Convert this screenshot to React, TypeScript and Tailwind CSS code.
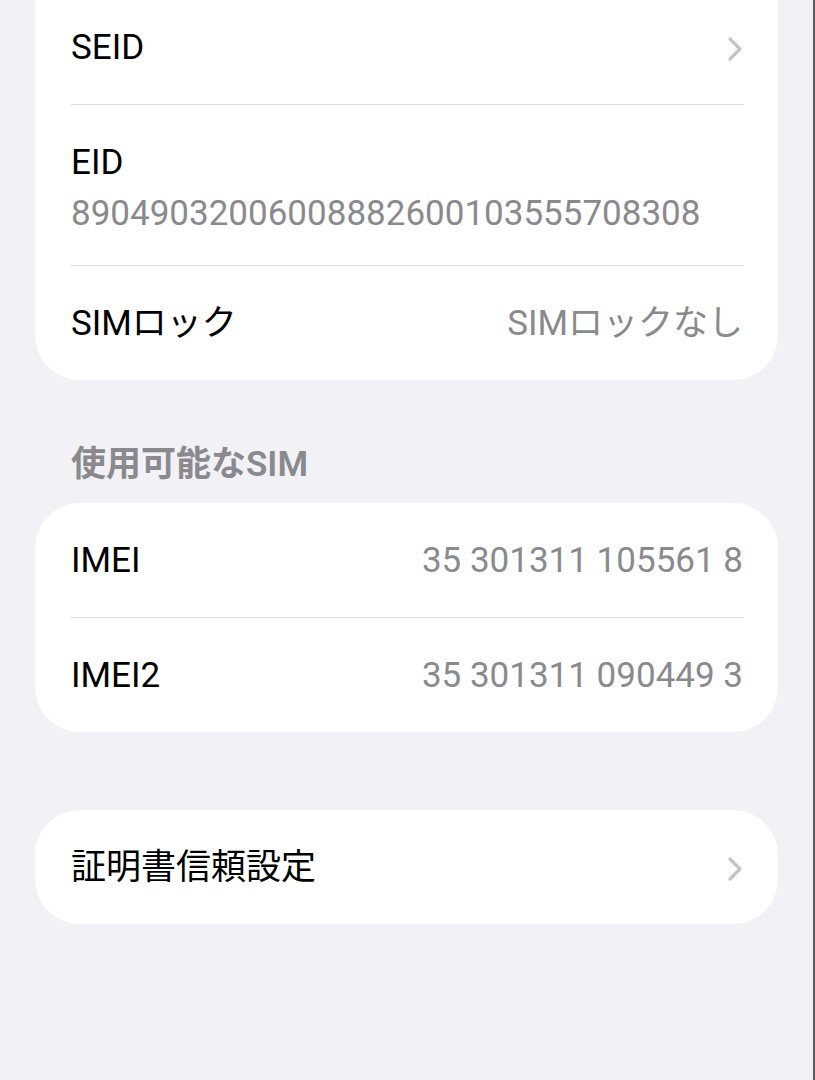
import React from 'react';

const FONT = "font-['Roboto','Noto_Sans_CJK_JP',sans-serif]";

const Chevron = () => (
  <svg width="16" height="26" viewBox="0 0 16 26" fill="none" className="shrink-0">
    <path d="M3 3 L13 13 L3 23" stroke="#c4c4c7" strokeWidth="3.2" strokeLinecap="round" strokeLinejoin="round" />
  </svg>
);

const Divider = () => <div className="ml-[36px] mr-[34px] h-px bg-[#dedee2]" />;

const Row = ({ label, value, chevron }: { label: string; value?: string; chevron?: boolean }) => (
  <div className="flex h-[114px] items-center justify-between pl-[36px] pr-[35px] pt-[3px]">
    <span className="text-[35px] text-black">{label}</span>
    {value && <span className="text-[35px] text-[#8a8a8e]">{value}</span>}
    {chevron && <Chevron />}
  </div>
);

const App: React.FC = () => {
  return (
    <div className={`min-h-screen h-[1080px] overflow-hidden bg-[#f1f1f6] ${FONT} border-r-2 border-[#5a5a5e]`}>
      <div className="pl-[35px] pr-[35px]">
        {/* Top card (scrolled partly off screen) */}
        <div className="-mt-[10px] rounded-b-[45px] bg-white">
          <Row label="SEID" chevron />
          <Divider />
          <div className="flex h-[160px] flex-col justify-center pl-[36px] pr-[35px] pt-[7px]">
            <span className="text-[35px] leading-[42px] text-black">EID</span>
            <span className="mt-[9px] text-[35px] leading-[42px] text-[#8a8a8e]">89049032006008882600103555708308</span>
          </div>
          <Divider />
          <Row label="SIMロック" value="SIMロックなし" />
        </div>

        {/* Available SIM section */}
        <div className="flex h-[123px] items-end pb-[12px] pl-[36px]">
          <span className="text-[35px] font-semibold text-[#8a8a8e]">使用可能なSIM</span>
        </div>
        <div className="rounded-[45px] bg-white">
          <Row label="IMEI" value="35 301311 105561 8" />
          <Divider />
          <Row label="IMEI2" value="35 301311 090449 3" />
        </div>

        <div className="mt-[78px] rounded-[45px] bg-white">
          <Row label="証明書信頼設定" chevron />
        </div>
      </div>
    </div>
  );
};

export default App;
